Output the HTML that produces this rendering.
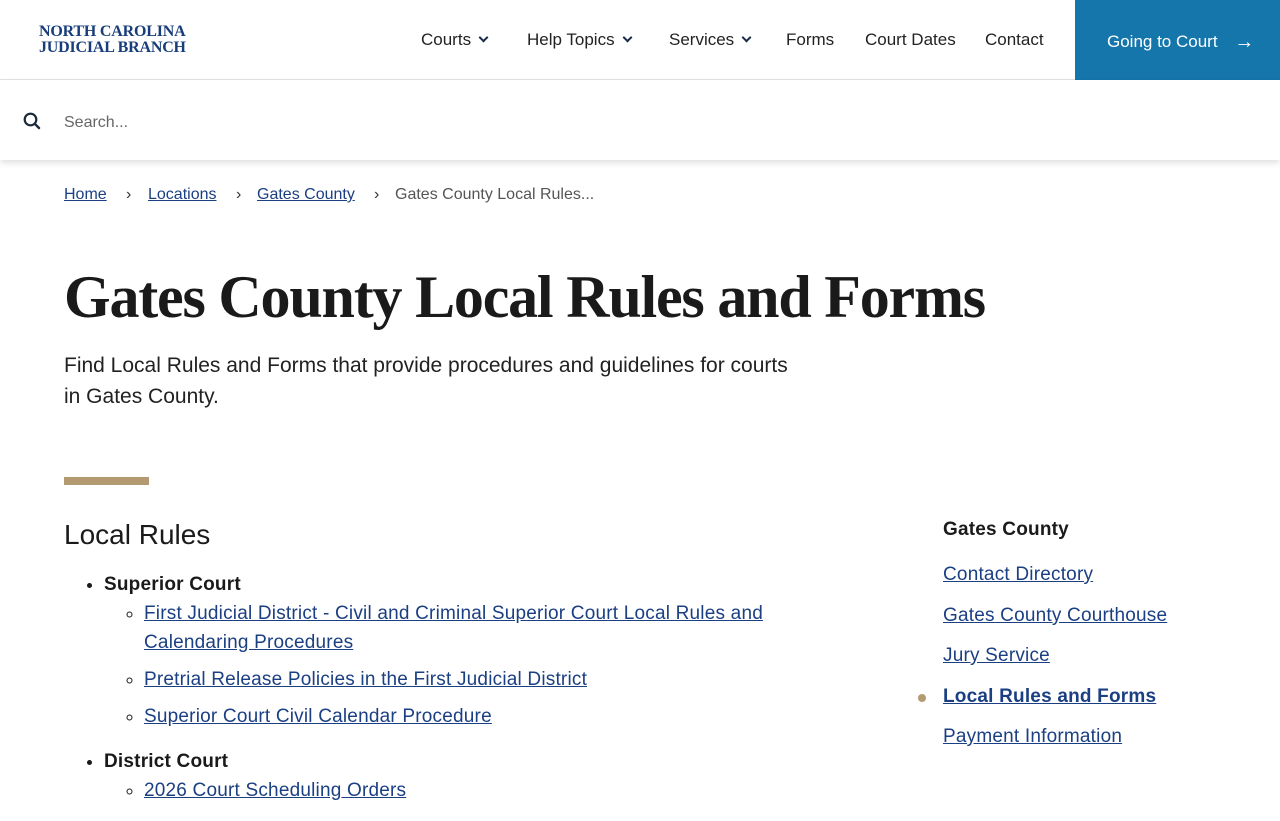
<!DOCTYPE html>
<html><head><meta charset="utf-8"><style>
*{margin:0;padding:0;box-sizing:border-box}
body{width:1280px;height:800px;overflow:hidden;background:#fff;font-family:"Liberation Sans",sans-serif;color:#1a1a1a}
.hdr{height:80px;position:relative;border-bottom:1px solid #e2e2e2}
.logo{position:absolute;left:39px;top:24px;font-family:"Liberation Serif",serif;font-weight:bold;color:#183d7a;font-size:16px;line-height:16px;letter-spacing:-0.2px}
.nav{position:absolute;top:30px;font-size:17px;color:#222}
.nav span{position:absolute;white-space:nowrap}
.chev{display:inline-block;width:7px;height:7px;border-right:2px solid #1a2a4a;border-bottom:2px solid #1a2a4a;transform:rotate(45deg);margin-left:9px;position:relative;top:-4px}
.btn{position:absolute;left:1075px;top:0;width:205px;height:80px;background:#1576ac;color:#fff;font-size:17px;padding:30px 0 0 32px}
.search{height:80px;position:relative;box-shadow:0 3px 6px rgba(0,0,0,.12)}
.search .ph{position:absolute;left:64px;top:34px;color:#666;font-size:16px}
.bc{position:absolute;top:186px;font-size:16px}
.bc a{color:#1b3f83;text-decoration:underline;position:absolute;white-space:nowrap}
.bc .s{position:absolute;color:#333}
h1{position:absolute;left:64px;top:263px;font-family:"Liberation Serif",serif;font-size:60px;font-weight:bold;letter-spacing:-1.2px;color:#1a1a1a}
.intro{position:absolute;left:64px;top:350px;font-size:21px;line-height:31px;width:765px;color:#222}
.bar{position:absolute;left:64px;top:477px;width:85px;height:8px;background:#b39a70}
h2{position:absolute;left:64px;top:519px;font-size:28px;font-weight:normal;color:#1a1a1a}
ul.l{position:absolute;left:104px;top:570px;font-size:19px;line-height:29px;width:700px;letter-spacing:0.2px}
ul.l>li{list-style:disc;font-weight:bold}
ul.l ul{margin-left:40px;font-weight:normal;margin-bottom:16px}
ul.l ul li{list-style:circle;margin-bottom:8px}
a{color:#1b3f83;text-decoration:underline}
.side{position:absolute;left:943px;top:519px;font-size:19px;letter-spacing:0.2px}
.side div{position:absolute;white-space:nowrap}
</style></head><body>
<div class="hdr">
<div class="logo">NORTH CAROLINA<br>JUDICIAL BRANCH</div>
<div class="nav">
<span style="left:421px">Courts<i class="chev"></i></span>
<span style="left:527px">Help Topics<i class="chev"></i></span>
<span style="left:669px">Services<i class="chev"></i></span>
<span style="left:786px">Forms</span>
<span style="left:865px">Court Dates</span>
<span style="left:985px">Contact</span>
</div>
<div class="btn">Going to Court <span style="margin-left:12px;font-size:20px;position:relative;top:1px">→</span></div>
</div>
<div class="search">
<svg style="position:absolute;left:23px;top:32px" width="18" height="18" viewBox="0 0 18 18"><circle cx="7.5" cy="7.5" r="5.8" fill="none" stroke="#1a2a3a" stroke-width="2.2"/><line x1="11.8" y1="11.8" x2="16" y2="16" stroke="#1a2a3a" stroke-width="2.4" stroke-linecap="round"/></svg>
<span class="ph">Search...</span>
</div>
<div class="bc">
<a style="left:64px">Home</a><span class="s" style="left:126px">›</span>
<a style="left:148px">Locations</a><span class="s" style="left:236px">›</span>
<a style="left:257px">Gates County</a><span class="s" style="left:374px">›</span>
<span class="s" style="left:395px;color:#555;white-space:nowrap">Gates County Local Rules...</span>
</div>
<h1>Gates County Local Rules and Forms</h1>
<div class="intro">Find Local Rules and Forms that provide procedures and guidelines for courts<br>in Gates County.</div>
<div class="bar"></div>
<h2>Local Rules</h2>
<ul class="l">
<li>Superior Court
<ul>
<li><a>First Judicial District - Civil and Criminal Superior Court Local Rules and Calendaring Procedures</a></li>
<li><a>Pretrial Release Policies in the First Judicial District</a></li>
<li><a>Superior Court Civil Calendar Procedure</a></li>
</ul></li>
<li>District Court
<ul><li><a>2026 Court Scheduling Orders</a></li></ul></li>
</ul>
<div class="side">
<div style="top:0;font-weight:bold">Gates County</div>
<div style="top:45px"><a>Contact Directory</a></div>
<div style="top:86px"><a>Gates County Courthouse</a></div>
<div style="top:126px"><a>Jury Service</a></div>
<div style="top:167px"><span style="position:absolute;left:-25px;top:8px;width:8px;height:8px;border-radius:50%;background:#b39a70"></span><a style="font-weight:bold">Local Rules and Forms</a></div>
<div style="top:207px"><a>Payment Information</a></div>
</div>
</body></html>
